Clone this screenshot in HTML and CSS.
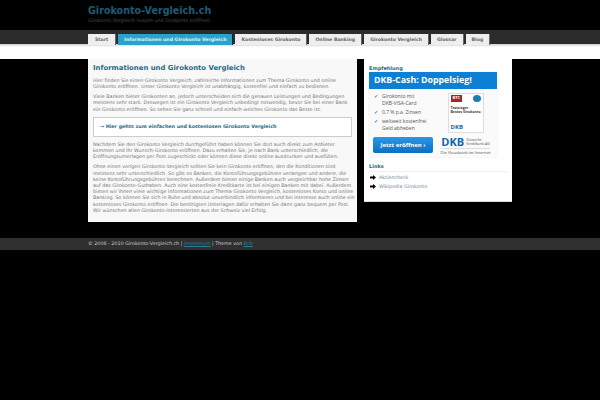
FILE: index.html
```html
<!DOCTYPE html>
<html lang="de">
<head>
<meta charset="utf-8">
<title>Girokonto-Vergleich.ch</title>
<link rel="stylesheet" href="styles.css">
</head>
<body>
<header class="head">
  <div class="wrap">
    <h1 class="logo">Girokonto-Vergleich.ch</h1>
    <p class="tagline">Girokonto Vergleich nutzen und Girokonto eröffnen</p>
  </div>
</header>
<nav class="navbar">
  <ul class="tabs">
    <li class="tab">Start</li>
    <li class="tab active">Informationen und Girokonto Vergleich</li>
    <li class="tab">Kostenloses Girokonto</li>
    <li class="tab">Online Banking</li>
    <li class="tab">Girokonto Vergleich</li>
    <li class="tab">Glossar</li>
    <li class="tab">Blog</li>
  </ul>
</nav>
<div class="band"></div>
<main class="wrap columns">
  <article class="content">
    <h2 class="title">Informationen und Girokonto Vergleich</h2>
    <p>Hier finden Sie einen Girokonto Vergleich, zahlreiche Informationen zum Thema Girokonto und online<br>Girokonto eröffnen. Unser Girokonto Vergleich ist unabhängig, kostenfrei und einfach zu bedienen.</p>
    <p>Viele Banken bietet Girokonten an, jedoch unterscheiden sich die genauen Leistungen und Bedingungen<br>meistens sehr stark. Deswegen ist ein Girokonto Vergleich unbedingt notwendig, bevor Sie bei einer Bank<br>ein Girokonto eröffnen. So sehen Sie ganz schnell und einfach welches Girokonto das Beste ist.</p>
    <div class="callout">→ Hier gehts zum einfachen und kostenlosen Girokonto Vergleich</div>
    <p>Nachdem Sie den Girokonto Vergleich durchgeführt haben können Sie dort auch direkt zum Anbieter<br>kommen und Ihr Wunsch-Girokonto eröffnen. Dazu erhalten Sie, je nach Bank unterschiedlich, die<br>Eröffnungsunterlagen per Post zugeschickt oder können diese direkt online ausdrucken und ausfüllen.</p>
    <p>Ohne einen vorigen Girokonto Vergleich sollten Sie kein Girokonto eröffnen, den die Konditionen sind<br>meistens sehr unterschiedlich. So gibt es Banken, die Kontoführungsgebühren verlangen und andere, die<br>keine Kontoführungsgebühren berechnen. Außerdem bieten einige Banken auch vergleichbar hohe Zinsen<br>auf das Girokonto-Guthaben. Auch eine kostenfreie Kreditkarte ist bei einigen Banken mit dabei. Außerdem<br>bieten wir Ihnen viele wichtige Informationen zum Thema Girokonto Vergleich, kostenloses Konto und online<br>Banking. So können Sie sich in Ruhe und absolut unverbindlich informieren und bei Interesse auch online ein<br>kostenloses Girokonto eröffnen. Die benötigten Unterlagen dafür erhalten Sie dann ganz bequem per Post.<br>Wir wünschen allen Girokonto-Interessierten aus der Schweiz viel Erfolg.</p>
  </article>
  <aside class="side">
    <h3 class="side-title">Empfehlung</h3>
    <div class="ad">
      <div class="ad-head">DKB-Cash: Doppelsieg!</div>
      <div class="ad-body">
        <div class="ad-left">
          <ul class="checks">
            <li>Girokonto mit<br>DKB-VISA-Card</li>
            <li>0,7 % p.a. Zinsen</li>
            <li>weltweit kostenfrei<br>Geld abheben</li>
          </ul>
          <div class="cta">Jetzt eröffnen ›</div>
        </div>
        <div class="ad-right">
          <div class="seal">
            <div class="seal-top"><span class="seal-red">BTC</span><span class="seal-dot"></span></div>
            <div class="seal-txt">Testsieger<br>Bestes Girokonto</div>
            <div class="seal-dkb">DKB</div>
          </div>
          <div class="brand"><span class="brand-dkb">DKB</span><span class="brand-name">Deutsche<br>Kreditbank AG</span></div>
          <div class="brand-sub">Die Hausbank im Internet</div>
        </div>
      </div>
    </div>
    <h3 class="side-title links-title">Links</h3>
    <ul class="links">
      <li>Aktiencheck</li>
      <li>Wikipedia Girokonto</li>
    </ul>
  </aside>
</main>
<footer class="foot">
  <div class="wrap foot-in">© 2008 - 2010 Girokonto-Vergleich.ch | <a class="foot-link">Impressum</a> | Theme von <a class="foot-link">Bob</a></div>
</footer>
</body>
</html>
```
FILE: styles.css
```css
* { box-sizing: border-box; }
html, body { margin: 0; padding: 0; background: #000; }
body { font-family: "DejaVu Sans", sans-serif; font-size: 4.8px; color: #777; height: 400px; overflow: hidden; }
ul { list-style: none; margin: 0; padding: 0; }
.wrap { width: 424px; margin-left: 88px; }
.head { height: 30px; }
.logo { margin: 0; padding-top: 3px; font-size: 9.6px; line-height: 15px; color: #1a5c75; font-weight: bold; }
.tagline { margin: 0; font-size: 4.8px; line-height: 5px; color: #4a4a4a; }
.navbar { height: 14px; background: #2c2c2c; }
.tabs { display: flex; padding: 4px 0 0 88px; }
.tab { height: 11px; margin-right: 2px; padding: 0 6px; line-height: 11px; background: #eee; color: #666; font-size: 4.65px; font-weight: bold; border-right: 1px solid #666; white-space: nowrap; }
.tab:first-child { padding: 0 7px; }
.active { background: #2aa3cc; color: #dff2f8; border-right-color: #124; }
.band { height: 15px; background: linear-gradient(#ccc, #fff 3px); }
.columns { display: flex; gap: 7px; align-items: flex-start; }
.content { width: 269px; height: 163px; background: #f8f8f8; padding: 3px 5px 0; }
.title { margin: 0 0 4px; font-size: 6.9px; line-height: 12px; color: #1d6a86; font-weight: bold; }
.content p { margin: 0 0 3.8px; line-height: 6.2px; white-space: nowrap; }
.callout { margin: 4.2px 0 5px; height: 20px; line-height: 18px; border: 1px solid #ccc; background: #fff; padding-left: 6px; color: #1d6a86; font-weight: bold; }
.side { width: 148px; height: 143px; background: #fff; padding: 4px 5px 0; border-bottom: 1px solid #ddd; }
.side-title { margin: 0 0 3px; font-size: 5px; line-height: 10px; color: #1d6a86; font-weight: bold; }
.side-title:first-child { margin: 0 0 -1px; }
.ad { width: 128px; height: 85px; background: #fafafa; box-shadow: 0 0 1px #ccc; font-family: "Open Sans", sans-serif; }
.ad-head { height: 17px; background: #0d80d6; color: #fff; font-size: 8.8px; font-weight: bold; line-height: 17px; padding-left: 5px; white-space: nowrap; }
.ad-body { display: flex; justify-content: space-between; padding: 4px 6px 0 4px; }
.checks { height: 44px; }
.checks li { padding-left: 9px; font-size: 5px; line-height: 7px; margin-bottom: 2px; color: #555; position: relative; }
.checks li::before { content: "✓"; position: absolute; left: 1px; top: 0; color: #1d74c0; font-weight: bold; }
.cta { width: 60px; height: 16px; background: linear-gradient(#2c97e5, #0b6fc0); color: #fff; font-size: 6px; font-weight: bold; line-height: 16px; text-align: center; border-radius: 2px; }
.ad-right { width: 51px; display: flex; flex-direction: column; align-items: center; }
.seal { width: 36px; height: 40px; background: #fff; border: 1px solid #ddd; padding: 1px 2px; color: #333; }
.seal-top { display: flex; justify-content: space-between; }
.seal-red { background: #a22; color: #fff; font-size: 4px; font-weight: bold; line-height: 6px; padding: 0 2px; }
.seal-dot { width: 8px; height: 7px; border-radius: 50%; background: #1a7fb0; }
.seal-txt { font-size: 3.5px; line-height: 4px; font-weight: bold; margin-top: 4px; white-space: nowrap; }
.seal-dkb { font-size: 6px; line-height: 8px; font-weight: bold; color: #1466ad; margin-top: 9px; }
.brand { display: flex; align-items: center; gap: 2px; margin-top: 4px; height: 10px; white-space: nowrap; }
.brand-dkb { font-size: 11px; font-weight: bold; color: #1466ad; line-height: 10px; }
.brand-name { font-size: 3.5px; line-height: 4px; color: #555; }
.brand-sub { font-size: 4.2px; line-height: 6px; margin-top: 1px; padding-top: 1px; color: #555; white-space: nowrap; border-top: 1px solid #ddd; }
.links-title { margin: 4px 0 0; line-height: 10px; padding-bottom: 0; border-bottom: 1px solid #f0f0f0; }
.links { padding-top: 1px; }
.links li { line-height: 9px; padding-left: 10px; color: #6a8a9a; position: relative; }
.links li::before { content: ""; position: absolute; left: 1px; top: 2px; width: 6px; height: 5px; background: #000; clip-path: polygon(0 30%, 50% 30%, 50% 0, 100% 50%, 50% 100%, 50% 70%, 0 70%); }
.foot { height: 12px; margin-top: 16px; background: #303030; }
.foot-in { line-height: 12px; color: #ccc; }
.foot-link { color: #2b7d99; text-decoration: underline; }
```
